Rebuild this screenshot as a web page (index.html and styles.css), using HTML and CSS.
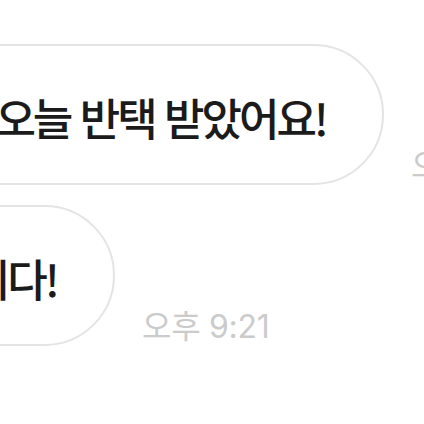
FILE: index.html
```html
<!DOCTYPE html>
<html lang="ko">
<head>
  <meta charset="UTF-8" />
  <meta name="viewport" content="width=device-width, initial-scale=1.0" />
  <title>채팅</title>
  <link rel="stylesheet" href="styles.css">
</head>
<body>

  <div class="chat">
    <div class="message-row">
      <div class="bubble-slot slot-wide">
        <div class="bubble">저 오늘 반택 받았어요!</div>
      </div>
      <div class="time">오후 9:21</div>
    </div>

    <div class="message-row">
      <div class="bubble-slot slot-narrow">
        <div class="bubble">감사합니다!</div>
      </div>
      <div class="time">오후 9:21</div>
    </div>
  </div>

</body>
</html>
```

FILE: styles.css
```css
html, body {
  margin: 0;
  padding: 0;
  background: #ffffff;
  overflow: hidden;
}

body {
  font-family: "Noto Sans CJK KR", "Noto Sans", sans-serif;
  width: 424px;
  height: 424px;
}

.chat {
  display: flex;
  flex-direction: column;
  gap: 20px;
  padding-top: 44px;
}

.message-row {
  display: flex;
  align-items: flex-end;
  gap: 27px;
  white-space: nowrap;
}

/* the bubble is pinned by its right edge, the rest runs off the left side */
.bubble-slot {
  display: flex;
  justify-content: flex-end;
  flex-shrink: 0;
}

.slot-wide {
  width: 384px;
}

.slot-narrow {
  width: 115px;
}

.bubble {
  flex-shrink: 0;
  box-sizing: border-box;
  height: 141px;
  display: flex;
  align-items: center;
  padding: 4px 56px 0 24px;
  border: 2px solid #e4e4e4;
  border-radius: 72px;
  font-size: 44px;
  font-weight: 500;
  letter-spacing: -3px;
  color: #1b1b1b;
}

.time {
  flex-shrink: 0;
  font-family: "Inter", "Noto Sans CJK KR", sans-serif;
  font-size: 32px;
  letter-spacing: -0.3px;
  color: #cbcbcb;
  margin-bottom: 3px;
  line-height: 1;
}
```
